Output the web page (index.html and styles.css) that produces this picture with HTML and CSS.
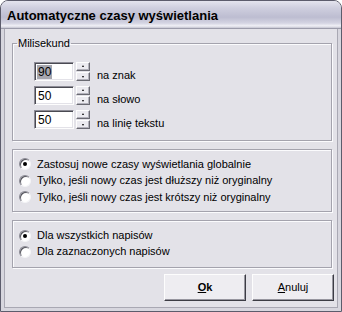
FILE: index.html
```html
<!DOCTYPE html>
<html lang="pl">
<head>
<meta charset="utf-8">
<title>Automatyczne czasy wyświetlania</title>
<link rel="stylesheet" href="styles.css">
</head>
<body>
<div class="window">
  <div class="titlebar">Automatyczne czasy wyświetlania</div>
  <div class="client">
    <fieldset class="group g1">
      <legend>Milisekund</legend>
      <div class="spins">
        <div class="spinrow">
          <div class="edit"><span class="sel">90</span></div>
          <div class="spin"><span class="sbtn up"></span><span class="sbtn down"></span></div>
          <span class="lbl">na znak</span>
        </div>
        <div class="spinrow">
          <div class="edit"><span>50</span></div>
          <div class="spin"><span class="sbtn up"></span><span class="sbtn down"></span></div>
          <span class="lbl">na słowo</span>
        </div>
        <div class="spinrow">
          <div class="edit"><span>50</span></div>
          <div class="spin"><span class="sbtn up"></span><span class="sbtn down"></span></div>
          <span class="lbl">na linię tekstu</span>
        </div>
      </div>
    </fieldset>
    <div class="group g2">
      <div class="radio"><span class="dot on"></span><span>Zastosuj nowe czasy wyświetlania globalnie</span></div>
      <div class="radio"><span class="dot"></span><span>Tylko, jeśli nowy czas jest dłuższy niż oryginalny</span></div>
      <div class="radio"><span class="dot"></span><span>Tylko, jeśli nowy czas jest krótszy niż oryginalny</span></div>
    </div>
    <div class="group g3">
      <div class="radio"><span class="dot on"></span><span>Dla wszystkich napisów</span></div>
      <div class="radio"><span class="dot"></span><span>Dla zaznaczonych napisów</span></div>
    </div>
    <div class="buttons">
      <div class="btn bold"><u>O</u>k</div>
      <div class="btn"><u>A</u>nuluj</div>
    </div>
  </div>
</div>
</body>
</html>
```
FILE: styles.css
```css
* { box-sizing: border-box; }
html, body { margin: 0; padding: 0; background: #ffffff; }
body { font-family: "Liberation Sans", Arial, sans-serif; font-size: 11px; color: #000; }

.window {
  width: 342px;
  height: 312px;
  border: 1px solid #5c5c6c;
  border-radius: 8px 8px 0 0;
  background: #e3e2e8;
  display: flex;
  flex-direction: column;
  overflow: hidden;
}

.titlebar {
  height: 28px;
  flex: none;
  padding-left: 6px;
  font-weight: bold;
  font-size: 13px;
  line-height: 30px;
  color: #000;
  background: linear-gradient(#e4e4ee 0%, #cfcfdf 25%, #bdbdd1 60%, #d4d4e2 82%, #f0f0f6 92%, #c4c4d0 100%);
  border-bottom: 1px solid #9c9cab;
}

.client {
  flex: 1;
  display: flex;
  flex-direction: column;
  border: 3px solid #d7d6de;
  border-top: none;
  box-shadow: inset 1px 0 0 #a9a8b3, inset -1px 0 0 #a9a8b3, inset 0 -1px 0 #a9a8b3;
  padding: 0 3px 0 5px;
}

.group {
  border: 1px solid #a4a3ad;
  box-shadow: 1px 1px 0 #fbfbfd, inset 1px 1px 0 #fbfbfd;
  margin: 8px 3px 0 3px;
}

fieldset.g1 {
  margin-top: 8px;
  padding: 0;
  min-width: 0;
}
fieldset.g1 legend {
  margin-left: 4px;
  padding: 0 1px;
  line-height: 13px;
  font-size: 11px;
}

.spins {
  display: flex;
  flex-direction: column;
  gap: 5px;
  padding: 12px 0 11px 21px;
}
.spinrow {
  display: flex;
  align-items: flex-start;
  height: 19px;
}
.edit {
  width: 40px;
  height: 19px;
  background: #fff;
  border: 1px solid;
  border-color: #8d8c96 #fdfdfd #fdfdfd #8d8c96;
  box-shadow: inset 1px 1px 0 #4a4a52, inset -1px -1px 0 #e3e2e8;
  padding: 2px 0 0 2px;
  font-size: 12px;
  line-height: 14px;
}
.edit span { display: inline-block; padding: 0 1px; }
.edit .sel { background: #a6a6ae; color: #000; }

.spin {
  display: flex;
  flex-direction: column;
  gap: 1px;
  margin-left: 2px;
  width: 14px;
}
.sbtn {
  position: relative;
  display: block;
  width: 14px;
  height: 9px;
  background: #ecebf0;
  border: 1px solid;
  border-color: #fdfdfd #6a6a72 #6a6a72 #fdfdfd;
  box-shadow: inset -1px -1px 0 #b2b1ba;
}
.sbtn.down { height: 9px; }
.sbtn::after {
  content: "";
  position: absolute;
  left: 5px;
  width: 0;
  height: 0;
  border-left: 1.5px solid transparent;
  border-right: 1.5px solid transparent;
}
.sbtn.up::after { top: 2px; border-bottom: 2px solid #000; }
.sbtn.down::after { top: 3px; border-top: 2px solid #000; }

.lbl {
  margin-left: 7px;
  padding-top: 7px;
  line-height: 13px;
  white-space: nowrap;
}

.g2 { padding: 6px 0 5px 6px; }
.g2 .radio { height: 16.5px; }
.g3 { padding: 7px 0 7px 6px; }
.g3 .radio { height: 16px; }

.radio {
  display: flex;
  align-items: center;
  gap: 6px;
  white-space: nowrap;
  line-height: 13px;
}
.dot {
  flex: none;
  position: relative;
  width: 12px;
  height: 12px;
  border-radius: 50%;
  background: #fff;
  border: 1px solid;
  border-color: #8a8994 #f4f4f7 #f4f4f7 #8a8994;
  box-shadow: inset 1px 1px 0 #55555d;
}
.dot.on::after {
  content: "";
  position: absolute;
  left: 3px;
  top: 3px;
  width: 4px;
  height: 4px;
  border-radius: 50%;
  background: #000;
}

.buttons {
  display: flex;
  justify-content: flex-end;
  gap: 6px;
  margin-top: 6px;
  padding-right: 1px;
}
.btn {
  width: 82px;
  height: 27px;
  display: flex;
  align-items: center;
  justify-content: center;
  background: #eeedf1;
  border: 1px solid;
  border-color: #fdfdfd #3c3c44 #3c3c44 #fdfdfd;
  box-shadow: inset -1px -1px 0 #97969f;
  padding-bottom: 1px;
}
.btn.bold { font-weight: bold; }
.btn u { text-decoration: underline; }
```
